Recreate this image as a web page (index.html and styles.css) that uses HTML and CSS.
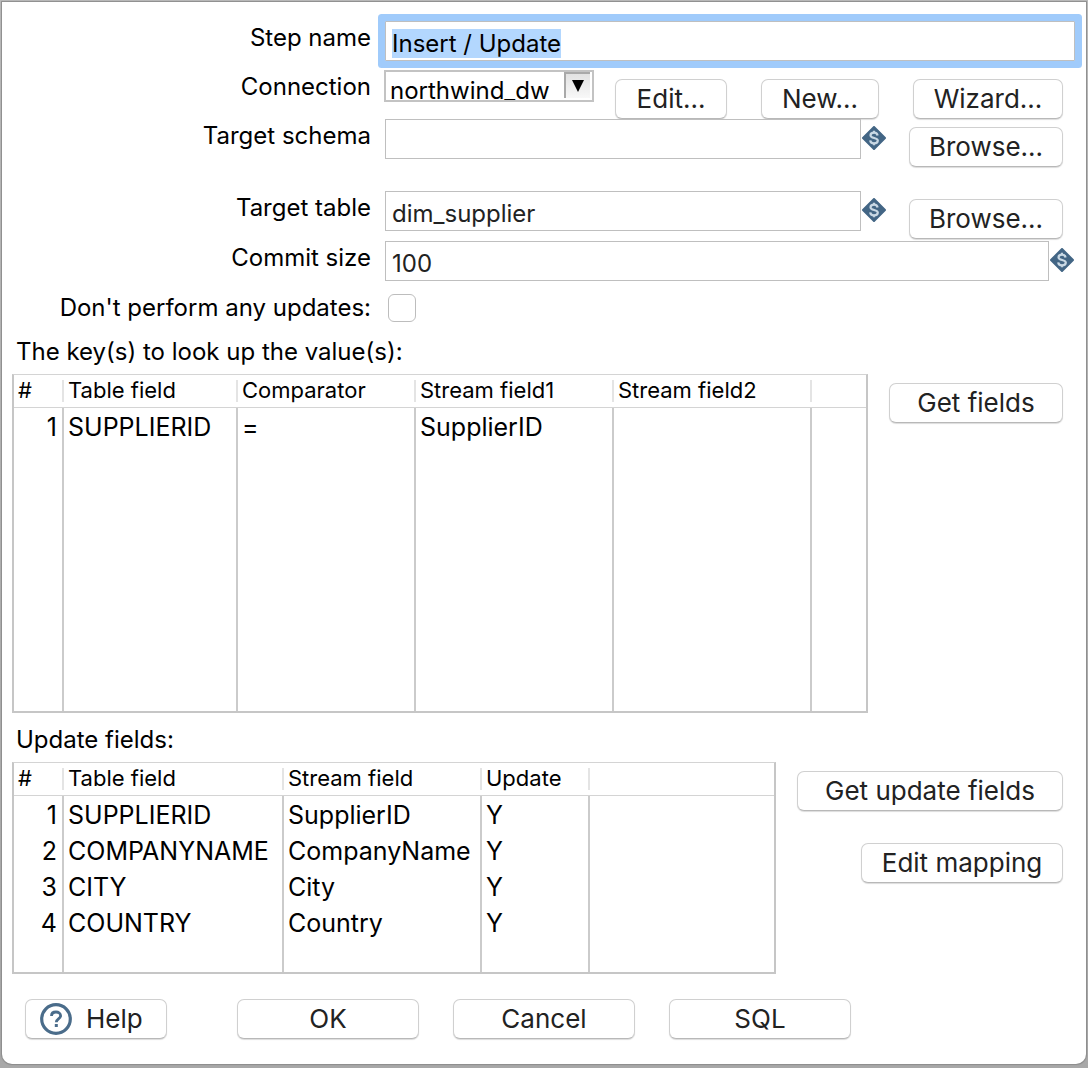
FILE: index.html
```html
<!DOCTYPE html>
<html lang="en">
<head>
<meta charset="utf-8">
<meta name="viewport" content="width=device-width, initial-scale=1">
<title>Insert / Update</title>
<link rel="stylesheet" href="styles.css">
</head>
<body>
<svg class="defs" aria-hidden="true">
  <symbol id="variable" viewBox="0 0 24 24">
    <path d="M12 1 23 12 12 23 1 12Z" fill="#436685" stroke="#436685" stroke-width="2" stroke-linejoin="round"/>
    <path d="M15.600 9.500C15.300 7.500 14 6.600 12.100 6.600c-2.100 0-3.600 1-3.600 2.600 0 3.600 7.300 1.900 7.300 5.400 0 1.700-1.600 2.800-3.800 2.800s-3.600-1.100-3.800-3.100M12 4.800v2M12 17v2.200" fill="none" stroke="#c9d8e4" stroke-width="2.200"/>
  </symbol>
</svg>
<form class="dialog">
  <div class="row row-wide row-step">
    <label for="step">Step name</label>
    <input class="text focused" id="step" type="text" value="Insert / Update">
  </div>
  <div class="row row-connection">
    <label for="connection">Connection</label>
    <div class="combo">
      <select id="connection"><option>northwind_dw</option></select>
      <span class="arrow" aria-hidden="true"><svg viewBox="0 0 12 12"><path d="M0 0H12L6 12Z"/></svg></span>
    </div>
    <div class="actions">
      <button type="button" class="w-edit">Edit...</button>
      <button type="button" class="w-new">New...</button>
      <button type="button" class="w-wizard">Wizard...</button>
    </div>
  </div>
  <div class="row row-schema">
    <label for="schema">Target schema</label>
    <input class="text" id="schema" type="text">
    <svg class="variable"><use href="#variable"/></svg>
    <button type="button" class="w-browse">Browse...</button>
  </div>
  <div class="row row-table">
    <label for="table">Target table</label>
    <input class="text" id="table" type="text" value="dim_supplier">
    <svg class="variable"><use href="#variable"/></svg>
    <button type="button" class="w-browse">Browse...</button>
  </div>
  <div class="row row-commit">
    <label for="commit">Commit size</label>
    <input class="text" id="commit" type="text" value="100">
    <svg class="variable"><use href="#variable"/></svg>
  </div>
  <div class="row">
    <label for="noupdate">Don't perform any updates:</label>
    <input class="check" id="noupdate" type="checkbox">
  </div>

  <h2 id="keys-title">The key(s) to look up the value(s):</h2>
  <div class="panel">
    <table class="grid grid-keys" aria-labelledby="keys-title">
      <colgroup><col class="c-num"><col class="c-174"><col class="c-178"><col class="c-198"><col class="c-198"><col></colgroup>
      <thead><tr><th>#</th><th>Table field</th><th>Comparator</th><th>Stream field1</th><th>Stream field2</th><th></th></tr></thead>
      <tbody>
        <tr><td>1</td><td>SUPPLIERID</td><td>=</td><td>SupplierID</td><td></td><td></td></tr>
        <tr class="filler"><td></td><td></td><td></td><td></td><td></td><td></td></tr>
      </tbody>
    </table>
    <div class="side"><button type="button" class="w-get">Get fields</button></div>
  </div>

  <h2 id="update-title">Update fields:</h2>
  <div class="panel">
    <table class="grid grid-update" aria-labelledby="update-title">
      <colgroup><col class="c-num"><col class="c-220"><col class="c-198"><col class="c-108"><col></colgroup>
      <thead><tr><th>#</th><th>Table field</th><th>Stream field</th><th>Update</th><th></th></tr></thead>
      <tbody>
        <tr><td>1</td><td>SUPPLIERID</td><td>SupplierID</td><td>Y</td><td></td></tr>
        <tr><td>2</td><td>COMPANYNAME</td><td>CompanyName</td><td>Y</td><td></td></tr>
        <tr><td>3</td><td>CITY</td><td>City</td><td>Y</td><td></td></tr>
        <tr><td>4</td><td>COUNTRY</td><td>Country</td><td>Y</td><td></td></tr>
        <tr class="filler"><td></td><td></td><td></td><td></td><td></td></tr>
      </tbody>
    </table>
    <div class="side">
      <button type="button" class="w-getupdate">Get update fields</button>
      <button type="button" class="w-mapping">Edit mapping</button>
    </div>
  </div>

  <footer>
    <button type="button" class="help">
      <svg viewBox="0 0 32 32" aria-hidden="true">
        <circle cx="16" cy="16" r="14.300" fill="none" stroke="#4a6c8a" stroke-width="3.200"/>
        <path d="M11.500 13c0-2.700 1.900-4 4.500-4s4.600 1.400 4.600 3.700c0 3.300-4.300 3.100-4.300 6.500" fill="none" stroke="#4a6c8a" stroke-width="2.800"/>
        <rect x="14.800" y="21" width="3" height="3" fill="#4a6c8a"/>
      </svg>Help
    </button>
    <button type="button">OK</button>
    <button type="button">Cancel</button>
    <button type="button">SQL</button>
  </footer>
</form>
<script src="main.js"></script>
</body>
</html>
```
FILE: styles.css
```css
* { box-sizing: border-box; }

body {
  margin: 0;
  padding: 2px 2px 4px;
  min-height: 100vh;
  display: flex;
  background: linear-gradient(#bdbdbd, #a8a8a8);
  color: #000;
  font: 24px/34px Inter, "Liberation Sans", sans-serif;
}

.defs { position: absolute; width: 0; height: 0; }

.dialog {
  flex: 1;
  min-width: 0;
  padding-top: 19px;
  background: #fff;
  border-radius: 0 0 10px 10px;
  box-shadow: 0 0 1px 1px #8c8c8c;
}

.row {
  display: flex;
  align-items: flex-start;
  padding-right: 23px;
}
.row-wide { padding-right: 11px; }
.row-step { margin-bottom: 9px; }
.row-table { margin-top: 24px; margin-bottom: 2px; }
.row-commit { margin-bottom: 10px; padding-right: 12px; }

.row label {
  width: 369px;
  margin-right: 14px;
  flex: none;
  text-align: right;
}

.text {
  flex: 1;
  min-width: 0;
  height: 40px;
  margin: 0;
  padding: 4px 6px 0;
  border: 1px solid #bfbfbf;
  border-radius: 0;
  background: #fff;
  color: #222;
  font: inherit;
  line-height: 32px;
  outline: none;
}
.focused {
  color: #000;
  box-shadow: 0 0 0 7px #a0cbfb;
  border-radius: 1px;
}
.focused::selection { background: rgba(178, 215, 254, 0.99); color: #000; }

.combo {
  position: relative;
  width: 210px;
  height: 32px;
  margin-left: -1px;
  border: 2px solid #c3c3c3;
  overflow: hidden;
  flex: none;
}
.combo select {
  appearance: none;
  display: block;
  width: 100%;
  height: 38px;
  margin: 0;
  padding: 0 30px 0 4px;
  border: 0;
  background: #fff;
  color: #000;
  font: inherit;
}
.arrow {
  position: absolute;
  top: 0;
  right: 2px;
  width: 26px;
  height: 26px;
  border-top: 2px solid #a9a9a9;
  border-left: 2px solid #a9a9a9;
  background: linear-gradient(#e2e2e2, #f8f8f8);
  pointer-events: none;
}
.arrow svg { display: block; width: 12px; height: 12px; margin: 6px; }

.actions {
  flex: 1;
  display: flex;
  justify-content: flex-end;
  gap: 34px;
}

button {
  height: 40px;
  margin: 0;
  padding: 0;
  border: 1px solid #d0d0d0;
  border-bottom-color: #b8b8b8;
  border-radius: 7px;
  background: #fff;
  box-shadow: 0 1px 1px #dcdcdc;
  color: #222;
  font: inherit;
  font-size: 26px;
  flex: none;
}
.row button { margin-top: 9px; }
.row .w-browse { margin-top: 8px; margin-left: 23px; width: 154px; }
.w-edit { width: 112px; }
.w-new { width: 118px; }
.w-wizard { width: 150px; }
.w-get { width: 174px; }
.w-getupdate { width: 266px; }
.w-mapping { width: 202px; }

.variable {
  width: 24px;
  height: 24px;
  margin: 7px 0 0 1px;
  flex: none;
}

.check {
  appearance: none;
  width: 28px;
  height: 28px;
  margin: 3px 0 3px 3px;
  border: 1px solid #bdbdbd;
  border-radius: 6px;
  background: #fff;
}

h2 {
  margin: 10px 0 5px 14px;
  font: inherit;
}

.panel {
  display: flex;
  align-items: flex-start;
  gap: 21px;
  padding: 0 23px 0 10px;
}
.side {
  display: flex;
  flex-direction: column;
  align-items: flex-end;
  gap: 32px;
  padding-top: 9px;
}

.grid {
  flex: 1;
  min-width: 0;
  table-layout: fixed;
  border: 2px solid #c6c6c6;
  border-top: 1px solid #d4d4d4;
  border-spacing: 0;
}
.grid-keys { height: 339px; }
.grid-update { height: 212px; }
.c-num { width: 50px; }
.c-108 { width: 108px; }
.c-174 { width: 174px; }
.c-178 { width: 178px; }
.c-198 { width: 198px; }
.c-220 { width: 220px; }

.grid th {
  height: 33px;
  padding: 0 0 2px 4px;
  border-bottom: 1px solid #d4d4d4;
  background: linear-gradient(#e4e4e4, #e4e4e4) right 0 top 5px / 2px 22px no-repeat;
  font-size: 22px;
  font-weight: 400;
  line-height: 30px;
  text-align: left;
  white-space: nowrap;
}
.grid th:last-child { background: none; }
.grid td {
  height: 36px;
  padding: 2px 0 0 4px;
  border-right: 2px solid #cbcbcb;
  font-size: 25px;
  line-height: 34px;
  white-space: nowrap;
}
.grid td:first-child { padding: 2px 5px 0 0; text-align: right; }
.grid td:last-child { border-right: 0; }
.grid .filler td { height: auto; padding: 0; }

footer {
  display: flex;
  gap: 34px;
  padding: 25px 23px;
}
footer button { width: 182px; }
footer .help {
  display: flex;
  align-items: center;
  gap: 14px;
  width: 142px;
  margin-right: 36px;
  padding-left: 14px;
}
.help svg { width: 32px; height: 32px; }
```
FILE: main.js
```js
const step = document.getElementById("step");
step.focus();
step.select();
```
